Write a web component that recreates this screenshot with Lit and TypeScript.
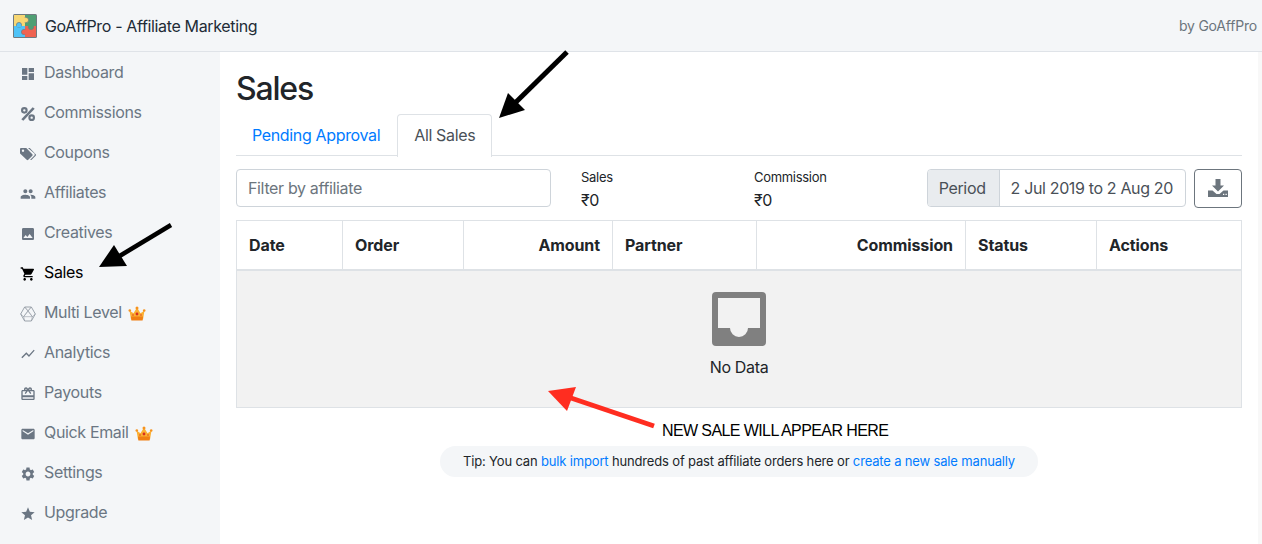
import { LitElement, html, css, svg } from "lit";
import { customElement } from "lit/decorators.js";

const ICONS: Record<string, unknown> = {
  dashboard: svg`<path d="M3 13h8V3H3v10zm0 8h8v-6H3v6zm10 0h8V11h-8v10zm0-18v6h8V3h-8z"/>`,
  percent: svg`<path d="M19 1.800l3 2.200L5 22.200l-3-2.200z"/><path fill-rule="evenodd" d="M6.500 1.500a5 5 0 1 1 0 10 5 5 0 0 1 0-10zm0 3.200a1.800 1.800 0 1 0 0 3.600 1.800 1.800 0 0 0 0-3.600zM17.500 12.500a5 5 0 1 1 0 10 5 5 0 0 1 0-10zm0 3.200a1.800 1.800 0 1 0 0 3.600 1.800 1.800 0 0 0 0-3.600z"/>`,
  tags: svg`<path fill-rule="evenodd" d="M0 4.500A1.500 1.500 0 0 1 1.500 3h7.100c.5 0 .9.2 1.200.5l8.700 8.700c.7.700.7 1.700 0 2.400l-6.100 6.100c-.7.700-1.700.7-2.400 0L.5 11.600c-.3-.3-.5-.8-.5-1.200V4.500zM4.500 5.200a1.800 1.800 0 1 0 0 3.600 1.800 1.800 0 0 0 0-3.600z"/><path d="M12 3h1.800c.5 0 .9.2 1.200.5l8.500 8.700c.7.700.7 1.700 0 2.400l-6.100 6.100c-.6.600-1.500.6-2.100.1l6-6.100c1.100-1.100 1.100-2.700 0-3.800z"/>`,
  people: svg`<path d="M16 11c1.660 0 2.990-1.340 2.990-3S17.660 5 16 5c-1.660 0-3 1.340-3 3s1.340 3 3 3zm-8 0c1.660 0 2.990-1.340 2.990-3S9.660 5 8 5C6.340 5 5 6.340 5 8s1.340 3 3 3zm0 2c-2.330 0-7 1.170-7 3.500V19h14v-2.500c0-2.330-4.670-3.500-7-3.500zm8 0c-.290 0-.620.020-.970.050 1.160.840 1.970 1.970 1.970 3.450V19h6v-2.500c0-2.330-4.670-3.500-7-3.500z"/>`,
  image: svg`<path d="M21 19V5c0-1.100-.9-2-2-2H5c-1.100 0-2 .9-2 2v14c0 1.100.9 2 2 2h14c1.100 0 2-.9 2-2zM8.500 13.500l2.500 3.010L14.500 12l4.500 6H5l3.500-4.500z"/>`,
  cart: svg`<path d="M7 18c-1.100 0-1.990.9-1.990 2S5.900 22 7 22s2-.9 2-2-.9-2-2-2zM1 2v2h2l3.600 7.590-1.350 2.450c-.160.280-.250.610-.250.960 0 1.100.9 2 2 2h12v-2H7.420c-.140 0-.250-.110-.250-.250l.030-.120.9-1.630h7.450c.750 0 1.410-.410 1.750-1.030l3.580-6.490c.080-.140.120-.310.120-.480 0-.550-.450-1-1-1H5.210l-.940-2H1zm16 16c-1.100 0-1.990.9-1.990 2s.890 2 1.990 2 2-.9 2-2-.9-2-2-2z"/>`,
  hex: svg`<g fill="none" stroke="currentColor" opacity=".75"><path stroke-width="1.300" d="M7 1.500h10L23 12l-6 10.500H7L1 12z"/><path stroke-width=".8" d="M7 1.500L12 7l5-5.500M12 7l6.500 9-1.500 6.500M12 7L5.500 16 7 22.500M1 12l4.500 4h13l4.500-4M5.500 16L17 1.500M18.500 16L7 1.500"/></g>`,
  chart: svg`<path d="M3.500 18.490l6-6.010 4 4L22 6.920l-1.410-1.410-7.090 7.970-4-4L2 16.990z"/>`,
  gift: svg`<path d="M20 6h-2.180c.110-.310.180-.650.180-1 0-1.660-1.340-3-3-3-1.050 0-1.960.540-2.500 1.350l-.5.670-.5-.680C10.960 2.540 10.050 2 9 2 7.340 2 6 3.340 6 5c0 .350.070.690.180 1H4c-1.110 0-1.990.890-1.990 2L2 19c0 1.110.890 2 2 2h16c1.110 0 2-.890 2-2V8c0-1.110-.890-2-2-2zm-5-2c.550 0 1 .450 1 1s-.450 1-1 1-1-.450-1-1 .450-1 1-1zM9 4c.550 0 1 .450 1 1s-.450 1-1 1-1-.450-1-1 .450-1 1-1zm11 15H4v-2h16v2zm0-5H4V8h5.080L7 10.830 8.620 12 11 8.760l1-1.360 1 1.360L15.380 12 17 10.830 14.920 8H20v6z"/>`,
  mail: svg`<path d="M20 4H4c-1.100 0-1.990.9-1.990 2L2 18c0 1.100.9 2 2 2h16c1.100 0 2-.9 2-2V6c0-1.100-.9-2-2-2zm0 4l-8 5-8-5V6l8 5 8-5v2z"/>`,
  cog: svg`<path d="M19.140 12.940c.040-.3.060-.610.060-.940 0-.320-.020-.640-.070-.940l2.030-1.580c.180-.140.230-.410.120-.610l-1.920-3.320c-.120-.220-.370-.290-.590-.220l-2.390.960c-.5-.380-1.030-.7-1.620-.940l-.360-2.540c-.040-.240-.240-.410-.480-.410h-3.840c-.240 0-.430.170-.470.410l-.360 2.540c-.590.240-1.130.570-1.620.940l-2.390-.960c-.220-.080-.470 0-.590.220L2.740 8.870c-.120.210-.080.470.120.610l2.030 1.580c-.050.3-.090.630-.090.940s.020.640.070.940l-2.030 1.580c-.180.140-.230.410-.120.610l1.920 3.320c.120.220.370.290.590.220l2.390-.960c.5.380 1.030.7 1.620.940l.360 2.540c.050.240.240.410.480.410h3.840c.240 0 .440-.170.470-.410l.360-2.540c.590-.240 1.130-.560 1.620-.940l2.390.960c.220.080.470 0 .590-.220l1.920-3.320c.120-.220.070-.470-.120-.610l-2.010-1.580zM12 15.600c-1.980 0-3.600-1.620-3.600-3.600s1.620-3.600 3.600-3.600 3.600 1.620 3.600 3.600-1.620 3.600-3.600 3.600z"/>`,
  star: svg`<path d="M12 17.270L18.180 21l-1.640-7.030L22 9.240l-7.190-.610L12 2 9.190 8.630 2 9.240l5.460 4.730L5.820 21z"/>`,
};

const NAV = [
  { label: "Dashboard", icon: "dashboard" },
  { label: "Commissions", icon: "percent" },
  { label: "Coupons", icon: "tags" },
  { label: "Affiliates", icon: "people" },
  { label: "Creatives", icon: "image" },
  { label: "Sales", icon: "cart", active: true },
  { label: "Multi Level", icon: "hex", crown: true },
  { label: "Analytics", icon: "chart" },
  { label: "Payouts", icon: "gift" },
  { label: "Quick Email", icon: "mail", crown: true },
  { label: "Settings", icon: "cog" },
  { label: "Upgrade", icon: "star" },
];

const COLUMNS = [
  { label: "Date", width: 106 },
  { label: "Order", width: 121 },
  { label: "Amount", width: 149, right: true },
  { label: "Partner", width: 144 },
  { label: "Commission", width: 209, right: true },
  { label: "Status", width: 131 },
  { label: "Actions", width: 145 },
];

@customElement("app-root")
export class AppRoot extends LitElement {
  static styles = css`
    :host {
      display: block;
      width: 1262px;
      height: 544px;
      overflow: hidden;
      position: relative;
      font-family: Inter, "Noto Sans", sans-serif;
      font-size: 16px;
      letter-spacing: -0.35px;
      color: #212529;
      background: #fff;
    }
    .topbar {
      height: 51px;
      display: flex;
      align-items: center;
      justify-content: space-between;
      padding: 0 5px 0 13px;
      background: #f4f6f8;
      border-bottom: 1px solid #dfe3e8;
    }
    .brand {
      display: flex;
      align-items: center;
      gap: 8px;
      color: #212b36;
    }
    .by {
      font-size: 14px;
      letter-spacing: -0.2px;
      color: #6c757d;
    }
    .body {
      display: flex;
      height: 492px;
    }
    .side {
      width: 220px;
      flex: none;
      background: #f4f6f8;
    }
    .nav-item {
      height: 40px;
      display: flex;
      align-items: center;
      padding-left: 20px;
      color: #6b7683;
    }
    .nav-item.active {
      color: #000;
    }
    .nav-item .icon {
      width: 16px;
      height: 16px;
      margin-top: 3px;
      margin-right: 8px;
      fill: currentColor;
      flex: none;
    }
    .crown {
      width: 18px;
      height: 15px;
      margin-left: 6px;
      margin-top: 3px;
    }
    .main {
      flex: 1;
      padding: 0 16px;
      min-width: 0;
    }
    .strip {
      width: 4px;
      flex: none;
      background: #f8f8f8;
    }
    h1 {
      margin: 0;
      padding-top: 18px;
      font-size: 32px;
      line-height: 38px;
      font-weight: 500;
      letter-spacing: -1.2px;
      height: 44px;
    }
    .tabs {
      display: flex;
      box-sizing: border-box;
      height: 42px;
      border-bottom: 1px solid #dee2e6;
    }
    .tab {
      padding: 0 16px;
      height: 41px;
      line-height: 41px;
      color: #007bff;
      border: 1px solid transparent;
      border-bottom: 0;
      border-radius: 4px 4px 0 0;
    }
    .tab:first-child {
      padding: 0 16px 0 15px;
    }
    .tab.active {
      color: #495057;
      background: #fff;
      border-color: #dee2e6;
      height: 42px;
    }
    .tools {
      display: flex;
      align-items: flex-start;
      margin-top: 13px;
      height: 38px;
    }
    .filter {
      width: 315px;
      height: 38px;
      box-sizing: border-box;
      padding: 0 11px;
      border: 1px solid #ced4da;
      border-radius: 4px;
      font: inherit;
      letter-spacing: inherit;
      color: #495057;
    }
    .filter::placeholder {
      color: #6c757d;
      opacity: 1;
    }
    .stat {
      font-size: 13px;
      letter-spacing: -0.3px;
      line-height: 16px;
      margin-left: 30px;
      width: 143px;
    }
    .stat b {
      display: block;
      font-weight: 400;
      font-size: 16px;
      line-height: 20px;
      margin-top: 5px;
    }
    .period {
      display: flex;
      margin-left: auto;
      height: 38px;
      box-sizing: border-box;
      border: 1px solid #ced4da;
      border-radius: 4px;
      line-height: 36px;
      overflow: hidden;
    }
    .period span {
      padding: 0 12px 0 11px;
      color: #495057;
    }
    .period .label {
      padding-left: 11px;
      padding-right: 13px;
      background: #e9ecef;
      border-right: 1px solid #ced4da;
    }
    .dl {
      width: 48px;
      height: 39px;
      box-sizing: border-box;
      margin-left: 8px;
      display: flex;
      align-items: center;
      justify-content: center;
      background: #fff;
      border: 1px solid #6c757d;
      border-radius: 4px;
      padding: 0 0 2px;
      color: #6c757d;
    }
    table {
      margin-top: 13px;
      width: 1005px;
      table-layout: fixed;
      border-collapse: collapse;
    }
    th {
      height: 49px;
      box-sizing: border-box;
      padding: 0 12px;
      text-align: left;
      font-weight: 700;
      letter-spacing: -0.1px;
      border: 1px solid #dee2e6;
      border-bottom-width: 2px;
    }
    th.right {
      text-align: right;
    }
    td {
      height: 138px;
      box-sizing: border-box;
      padding: 0;
      background: #f2f2f2;
      border: 1px solid #dee2e6;
    }
    .empty {
      display: flex;
      flex-direction: column;
      align-items: center;
      gap: 11px;
      margin-top: -9px;
    }
    .tip-row {
      display: flex;
      justify-content: center;
      margin-top: 38px;
    }
    .tip {
      width: 598px;
      height: 31px;
      box-sizing: border-box;
      padding-bottom: 2px;
      display: flex;
      align-items: center;
      justify-content: center;
      background: #f4f6f8;
      border-radius: 16px;
      font-size: 13px;
      letter-spacing: -0.16px;
      white-space: pre;
    }
    .tip a {
      color: #007bff;
    }
    .note {
      position: absolute;
      left: 662px;
      top: 423px;
      font-family: "Liberation Sans", sans-serif;
      font-size: 16px;
      letter-spacing: -0.6px;
      line-height: 16px;
      color: #000;
    }
    .arrows {
      position: absolute;
      left: 0;
      top: 0;
      pointer-events: none;
    }
  `;

  crown() {
    return html`<svg class="crown" viewBox="0 0 18 15">
      <path fill="#fbb034" d="M1.500 4.500l4 2.800L9 1.500l3.500 5.800 4-2.800L15 13.500H3z" />
      <path fill="#f07f13" d="M3 10.500h12l-.4 4H3.400z" />
      <circle cx="9" cy="2" r="1.500" fill="#f6931e" />
      <circle cx="1.800" cy="4.500" r="1.300" fill="#f6931e" />
      <circle cx="16.200" cy="4.500" r="1.300" fill="#f6931e" />
      <circle cx="9" cy="8" r="1.400" fill="#d8301f" />
      <circle cx="5" cy="9" r=".8" fill="#e0441f" />
      <circle cx="13" cy="9" r=".8" fill="#e0441f" />
    </svg>`;
  }

  render() {
    return html`
      <div class="topbar">
        <div class="brand">
          <svg width="24" height="24" viewBox="0 0 24 24">
            <rect x="0" y="0" width="24" height="24" rx="1.500" fill="#6f7a80" />
            <rect x="1" y="1" width="11" height="11" fill="#f7d774" />
            <rect x="12" y="1" width="11" height="11" fill="#4f9f74" />
            <rect x="1" y="12" width="11" height="11" fill="#4fc3f7" />
            <rect x="12" y="12" width="11" height="11" fill="#ef6351" />
            <circle cx="6" cy="11" r="2.600" fill="#4fc3f7" stroke="#6f7a80" stroke-width=".7" />
            <rect x="3.500" y="11.500" width="5" height="2" fill="#4fc3f7" />
            <circle cx="13" cy="6" r="2.600" fill="#f7d774" stroke="#6f7a80" stroke-width=".7" />
            <rect x="10" y="3.500" width="2.500" height="5" fill="#f7d774" />
            <circle cx="18" cy="13" r="2.600" fill="#4f9f74" stroke="#6f7a80" stroke-width=".7" />
            <rect x="15.500" y="10" width="5" height="2.500" fill="#4f9f74" />
            <circle cx="11" cy="18" r="2.600" fill="#ef6351" stroke="#6f7a80" stroke-width=".7" />
            <rect x="11.500" y="15.500" width="2.500" height="5" fill="#ef6351" />
          </svg>
          <span>GoAffPro - Affiliate Marketing</span>
        </div>
        <div class="by">by GoAffPro</div>
      </div>
      <div class="body">
        <nav class="side">
          ${NAV.map(
            (n) => html`<div class="nav-item ${n.active ? "active" : ""}">
              <svg class="icon" viewBox="0 0 24 24">${ICONS[n.icon]}</svg>
              <span>${n.label}</span>
              ${n.crown ? this.crown() : ""}
            </div>`
          )}
        </nav>
        <main class="main">
          <h1>Sales</h1>
          <div class="tabs">
            <div class="tab">Pending Approval</div>
            <div class="tab active">All Sales</div>
          </div>
          <div class="tools">
            <input class="filter" placeholder="Filter by affiliate" />
            <div class="stat">Sales<b>₹0</b></div>
            <div class="stat">Commission<b>₹0</b></div>
            <div class="period">
              <span class="label">Period</span>
              <span>2 Jul 2019 to 2 Aug 20</span>
            </div>
            <button class="dl">
              <svg width="22" height="20" viewBox="0 0 22 20" fill="currentColor">
                <path d="M8.500 1h5v6.500H17L11 13.500 5 7.500h3.500z" />
                <path fill-rule="evenodd" d="M1 12.500h4.500l4 3.500h3l4-3.500H21V19H1zM16 15.700h1.300V17H16zm2.500 0h1.300V17h-1.300z" />
              </svg>
            </button>
          </div>
          <table>
            <colgroup>${COLUMNS.map((c) => html`<col style="width:${c.width}px" />`)}</colgroup>
            <thead>
              <tr>${COLUMNS.map((c) => html`<th class=${c.right ? "right" : ""}>${c.label}</th>`)}</tr>
            </thead>
            <tbody>
              <tr>
                <td colspan="7">
                  <div class="empty">
                    <svg width="54" height="54" viewBox="0 0 54 54">
                      <path
                        fill="#808080"
                        fill-rule="evenodd"
                        d="M4 0h46a4 4 0 0 1 4 4v46a4 4 0 0 1-4 4H4a4 4 0 0 1-4-4V4a4 4 0 0 1 4-4zM6 6v30h12a9 9 0 0 0 18 0h12V6z"
                      />
                    </svg>
                    <span>No Data</span>
                  </div>
                </td>
              </tr>
            </tbody>
          </table>
          <div class="tip-row">
            <div class="tip">Tip: You can <a>bulk import</a> hundreds of past affiliate orders here or <a>create a new sale manually</a></div>
          </div>
        </main>
        <div class="strip"></div>
      </div>
      <div class="note">NEW SALE WILL APPEAR HERE</div>
      <svg class="arrows" width="1262" height="544" viewBox="0 0 1262 544">
        <path stroke="#000" stroke-width="4.500" d="M171 225L118 257" />
        <path d="M99 267L114 245 127 266z" fill="#000" />
        <path stroke="#000" stroke-width="5" d="M567 52L513 105" />
        <path d="M499 118L508 93 525 110z" fill="#000" />
        <path stroke="#ff2d20" stroke-width="5" d="M654 426L568 397" />
        <path d="M548 391L576 387 567 411z" fill="#ff2d20" />
      </svg>
    `;
  }
}
